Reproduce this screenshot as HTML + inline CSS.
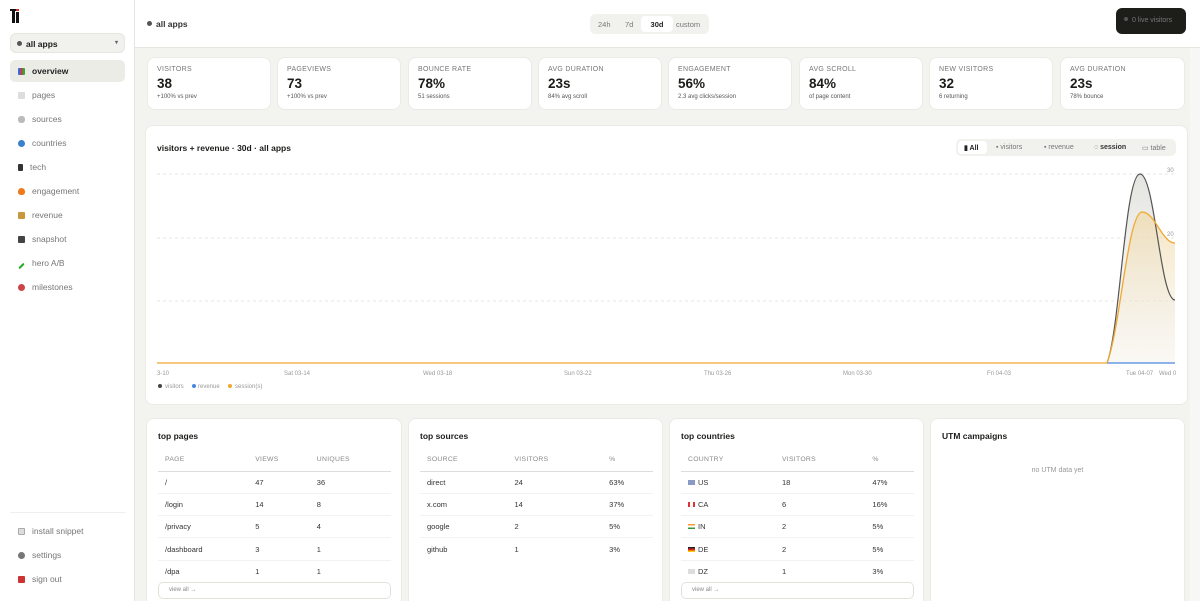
<!DOCTYPE html>
<html style="overflow:hidden;width:1200px;height:601px"><head><meta charset="utf-8"><style>
*{box-sizing:border-box;margin:0;padding:0}
body{width:1200px;height:601px;overflow:hidden;background:#f3f3ef;font-family:"Liberation Sans",sans-serif;color:#1c1c1a;position:relative}
.side{position:absolute;left:0;top:0;width:135px;height:601px;background:#fff;border-right:1px solid #e6e6e1}
.logo{position:absolute;left:10px;top:9px;width:10px;height:14px}
.sel{position:absolute;left:10px;top:33px;width:115px;height:20px;background:#f1f1ed;border:1px solid #e6e6e0;border-radius:6px;font-size:8.5px;font-weight:bold;padding:5px 0 0 6px}
.dot{display:inline-block;width:5px;height:5px;border-radius:50%;background:#555;margin-right:4px;vertical-align:1px}
.nav{position:absolute;left:10px;width:115px;height:22px;font-size:8.5px;color:#777;padding:6px 0 0 8px;border-radius:5px}
.nav i{display:inline-block;width:7px;height:7px;margin-right:7px;vertical-align:-1px;border-radius:1px}
.nav.act{background:#ecece7;color:#222;font-weight:bold}
.hdr{position:absolute;left:135px;top:0;right:0;height:48px;background:#fff;border-bottom:1px solid #e6e6e1}
.seg{position:absolute;left:590px;top:14px;width:119px;height:20px;background:#f1f1ed;border-radius:5px;font-size:7.5px;color:#777}
.seg span{position:absolute;top:6px}
.live{position:absolute;left:1116px;top:8px;width:70px;height:26px;background:#1d1d1a;border-radius:6px;color:#777;font-size:7px;padding:9px 0 0 8px}
.card{position:absolute;background:#fff;border-radius:8px;border:1px solid #ebebe6;overflow:hidden}
.st{top:57px;height:53px;width:124px;padding:8px 0 0 9px}
.st .l{font-size:7px;color:#777;letter-spacing:.3px}
.st .v{font-size:13.5px;font-weight:bold;margin-top:3px}
.st .s{font-size:6px;color:#555;margin-top:3px}
.tt{font-size:8.5px;font-weight:bold}
table{border-collapse:collapse;width:233px;font-size:7.5px;margin-top:8px}
th{font-weight:normal;color:#888;text-align:left;font-size:6.8px;letter-spacing:.3px;height:22px;border-bottom:1px solid #ddd;padding-left:7px}
td{height:22.3px;padding-left:7px;border-bottom:1px solid #f2f2ee;color:#333}
.va{width:233px;height:17px;border:1px solid #e2e2dd;border-radius:5px;font-size:6px;color:#888;padding:4px 0 0 10px;margin-top:0}
.fl{display:inline-block;width:7px;height:5px;margin-right:3px}
.tabs{position:absolute;left:956px;top:139px;width:220px;height:17px;background:#f1f1ed;border-radius:5px;font-size:7px;color:#777}
.tabs span{position:absolute;top:5px}
</style></head><body>
<div class="side">
<svg class="logo" viewBox="0 0 10 14"><rect x="0" y="0" width="6" height="2" fill="#111"/><rect x="2" y="0" width="3" height="14" fill="#111"/><rect x="6" y="3" width="3" height="11" fill="#111"/><rect x="6" y="0" width="3" height="2" fill="#c33"/></svg>
<div class="sel"><span class="dot"></span>all apps<span style="position:absolute;right:6px;top:5px;font-size:6px;color:#666">▾</span></div>
<div class="nav act" style="top:60px"><i style="background:linear-gradient(90deg,#3a6ad4 33%,#d33 33% 66%,#3a3 66%)"></i>overview</div>
<div class="nav" style="top:84px"><i style="background:#ddd"></i>pages</div>
<div class="nav" style="top:108px"><i style="background:#bbb;border-radius:3px"></i>sources</div>
<div class="nav" style="top:132px"><i style="background:#3b7fd0;border-radius:50%"></i>countries</div>
<div class="nav" style="top:156px"><i style="background:#333;width:5px"></i>tech</div>
<div class="nav" style="top:180px"><i style="background:#f07a1a;border-radius:50% 50% 40% 40%"></i>engagement</div>
<div class="nav" style="top:204px"><i style="background:#c9973c"></i>revenue</div>
<div class="nav" style="top:228px"><i style="background:#444"></i>snapshot</div>
<div class="nav" style="top:252px"><i style="background:#2a2;width:7px;height:2px;transform:rotate(-45deg)"></i>hero A/B</div>
<div class="nav" style="top:276px"><i style="background:#c44;border-radius:50%"></i>milestones</div>
<div style="position:absolute;left:10px;top:512px;width:115px;border-top:1px solid #eee"></div>
<div class="nav" style="top:520px"><i style="background:#ddd;border:1px solid #aaa"></i>install snippet</div>
<div class="nav" style="top:544px"><i style="background:#777;border-radius:50%"></i>settings</div>
<div class="nav" style="top:568px"><i style="background:#c33"></i>sign out</div>
</div>
<div class="hdr">
<div style="position:absolute;left:12px;top:19px;font-size:8.5px;font-weight:bold;color:#333"><span class="dot"></span>all apps</div>
</div>
<div class="seg"><span style="left:8px">24h</span><span style="left:35px">7d</span><span style="left:51px;top:2px;width:32px;height:16px;background:#fff;border-radius:4px;color:#222;font-weight:bold;text-align:center;padding-top:4px">30d</span><span style="left:86px">custom</span></div>
<div class="live"><span class="dot" style="background:#555;width:4px;height:4px"></span>0 live visitors</div>
<div style="position:absolute;right:0;top:48px;width:10px;height:553px;background:#f7f7f5"></div>

<div class="card st" style="left:147px"><div class="l">VISITORS</div><div class="v">38</div><div class="s">+100% vs prev</div></div>
<div class="card st" style="left:277px"><div class="l">PAGEVIEWS</div><div class="v">73</div><div class="s">+100% vs prev</div></div>
<div class="card st" style="left:408px"><div class="l">BOUNCE RATE</div><div class="v">78%</div><div class="s">51 sessions</div></div>
<div class="card st" style="left:538px"><div class="l">AVG DURATION</div><div class="v">23s</div><div class="s">84% avg scroll</div></div>
<div class="card st" style="left:668px"><div class="l">ENGAGEMENT</div><div class="v">56%</div><div class="s">2.3 avg clicks/session</div></div>
<div class="card st" style="left:799px"><div class="l">AVG SCROLL</div><div class="v">84%</div><div class="s">of page content</div></div>
<div class="card st" style="left:929px"><div class="l">NEW VISITORS</div><div class="v">32</div><div class="s">6 returning</div></div>
<div class="card st" style="left:1060px;width:125px"><div class="l">AVG DURATION</div><div class="v">23s</div><div class="s">78% bounce</div></div>

<div class="card" style="left:145px;top:125px;width:1043px;height:280px"></div>
<div class="tt" style="position:absolute;left:157px;top:143px">visitors + revenue · 30d · all apps</div>
<div class="tabs"><span style="left:2px;top:2px;width:29px;height:13px;background:#fff;border-radius:4px;color:#222;font-weight:bold;padding:3px 0 0 6px">▮ All</span><span style="left:40px">▪ visitors</span><span style="left:88px">▪ revenue</span><span style="left:138px;color:#333;font-weight:bold">◌ session</span><span style="left:186px">▭ table</span></div>
<svg style="position:absolute;left:0;top:0" width="1200" height="601">
<defs><linearGradient id="g1" x1="0" y1="0" x2="0" y2="1"><stop offset="0" stop-color="#d8d8d2" stop-opacity=".7"/><stop offset="1" stop-color="#eee" stop-opacity=".2"/></linearGradient>
<linearGradient id="g2" x1="0" y1="0" x2="0" y2="1"><stop offset="0" stop-color="#f0d9a8" stop-opacity=".7"/><stop offset="1" stop-color="#f6ecd8" stop-opacity=".2"/></linearGradient></defs>
<g stroke="#e4e4e0" stroke-dasharray="3 3" stroke-width="1"><line x1="157" y1="174" x2="1175" y2="174"/><line x1="157" y1="238" x2="1175" y2="238"/><line x1="157" y1="301" x2="1175" y2="301"/></g>
<path d="M1107 363 C1120 330 1125 174 1140 174 C1155 174 1160 300 1175 300 L1175 363Z" fill="url(#g1)"/>
<path d="M1107 363 C1120 330 1128 212 1142 212 C1155 212 1162 243 1175 243 L1175 363Z" fill="url(#g2)"/>
<path d="M1107 363 C1120 330 1125 174 1140 174 C1155 174 1160 300 1175 300" fill="none" stroke="#555" stroke-width="1.2"/>
<line x1="157" y1="363" x2="1107" y2="363" stroke="#f0a830" stroke-width="1.3"/>
<line x1="1107" y1="363" x2="1175" y2="363" stroke="#4a86e0" stroke-width="1.3"/>
<path d="M1107 363 C1120 330 1128 212 1142 212 C1155 212 1162 243 1175 243" fill="none" stroke="#f0a830" stroke-width="1.3"/>
<g font-family="Liberation Sans" font-size="6" fill="#999"><text x="1167" y="172">30</text><text x="1167" y="236">20</text>
<text x="157" y="375">3-10</text><text x="284" y="375">Sat 03-14</text><text x="423" y="375">Wed 03-18</text><text x="564" y="375">Sun 03-22</text><text x="704" y="375">Thu 03-26</text><text x="843" y="375">Mon 03-30</text><text x="987" y="375">Fri 04-03</text><text x="1126" y="375">Tue 04-07</text><text x="1159" y="375">Wed 0</text>
<circle cx="160" cy="386" r="2" fill="#444"/><text x="165" y="388">visitors</text><circle cx="194" cy="386" r="2" fill="#4a86e0"/><text x="198" y="388">revenue</text><circle cx="230" cy="386" r="2" fill="#f0a830"/><text x="235" y="388">session(s)</text></g>
</svg>

<div class="card" style="left:146px;top:418px;width:256px;height:183px;padding:12px 0 0 11px;border-bottom:0;border-radius:8px 8px 0 0"><div class="tt">top pages</div>
<table><tr><th>PAGE</th><th>VIEWS</th><th>UNIQUES</th></tr><tr><td>/</td><td>47</td><td>36</td></tr><tr><td>/login</td><td>14</td><td>8</td></tr><tr><td>/privacy</td><td>5</td><td>4</td></tr><tr><td>/dashboard</td><td>3</td><td>1</td></tr><tr><td style="border:0">/dpa</td><td style="border:0">1</td><td style="border:0">1</td></tr></table>
<div class="va">view all →</div></div>
<div class="card" style="left:408px;top:418px;width:255px;height:183px;padding:12px 0 0 11px;border-bottom:0;border-radius:8px 8px 0 0"><div class="tt">top sources</div>
<table><tr><th>SOURCE</th><th>VISITORS</th><th>%</th></tr><tr><td>direct</td><td>24</td><td>63%</td></tr><tr><td>x.com</td><td>14</td><td>37%</td></tr><tr><td>google</td><td>2</td><td>5%</td></tr><tr><td style="border:0">github</td><td style="border:0">1</td><td style="border:0">3%</td></tr></table></div>
<div class="card" style="left:669px;top:418px;width:255px;height:183px;padding:12px 0 0 11px;border-bottom:0;border-radius:8px 8px 0 0"><div class="tt">top countries</div>
<table><tr><th>COUNTRY</th><th>VISITORS</th><th>%</th></tr><tr><td><span class="fl" style="background:#8a9ac8"></span>US</td><td>18</td><td>47%</td></tr><tr><td><span class="fl" style="background:linear-gradient(90deg,#d33 30%,#fff 30% 70%,#d33 70%)"></span>CA</td><td>6</td><td>16%</td></tr><tr><td><span class="fl" style="background:linear-gradient(#f93 33%,#fff 33% 66%,#393 66%)"></span>IN</td><td>2</td><td>5%</td></tr><tr><td><span class="fl" style="background:linear-gradient(#222 33%,#d22 33% 66%,#fc0 66%)"></span>DE</td><td>2</td><td>5%</td></tr><tr><td style="border:0"><span class="fl" style="background:#ddd"></span>DZ</td><td style="border:0">1</td><td style="border:0">3%</td></tr></table>
<div class="va">view all →</div></div>
<div class="card" style="left:930px;top:418px;width:255px;height:183px;padding:12px 0 0 11px;border-bottom:0;border-radius:8px 8px 0 0"><div class="tt">UTM campaigns</div>
<div style="text-align:center;font-size:7px;color:#999;margin-top:26px;padding-right:11px">no UTM data yet</div></div>
</body></html>
